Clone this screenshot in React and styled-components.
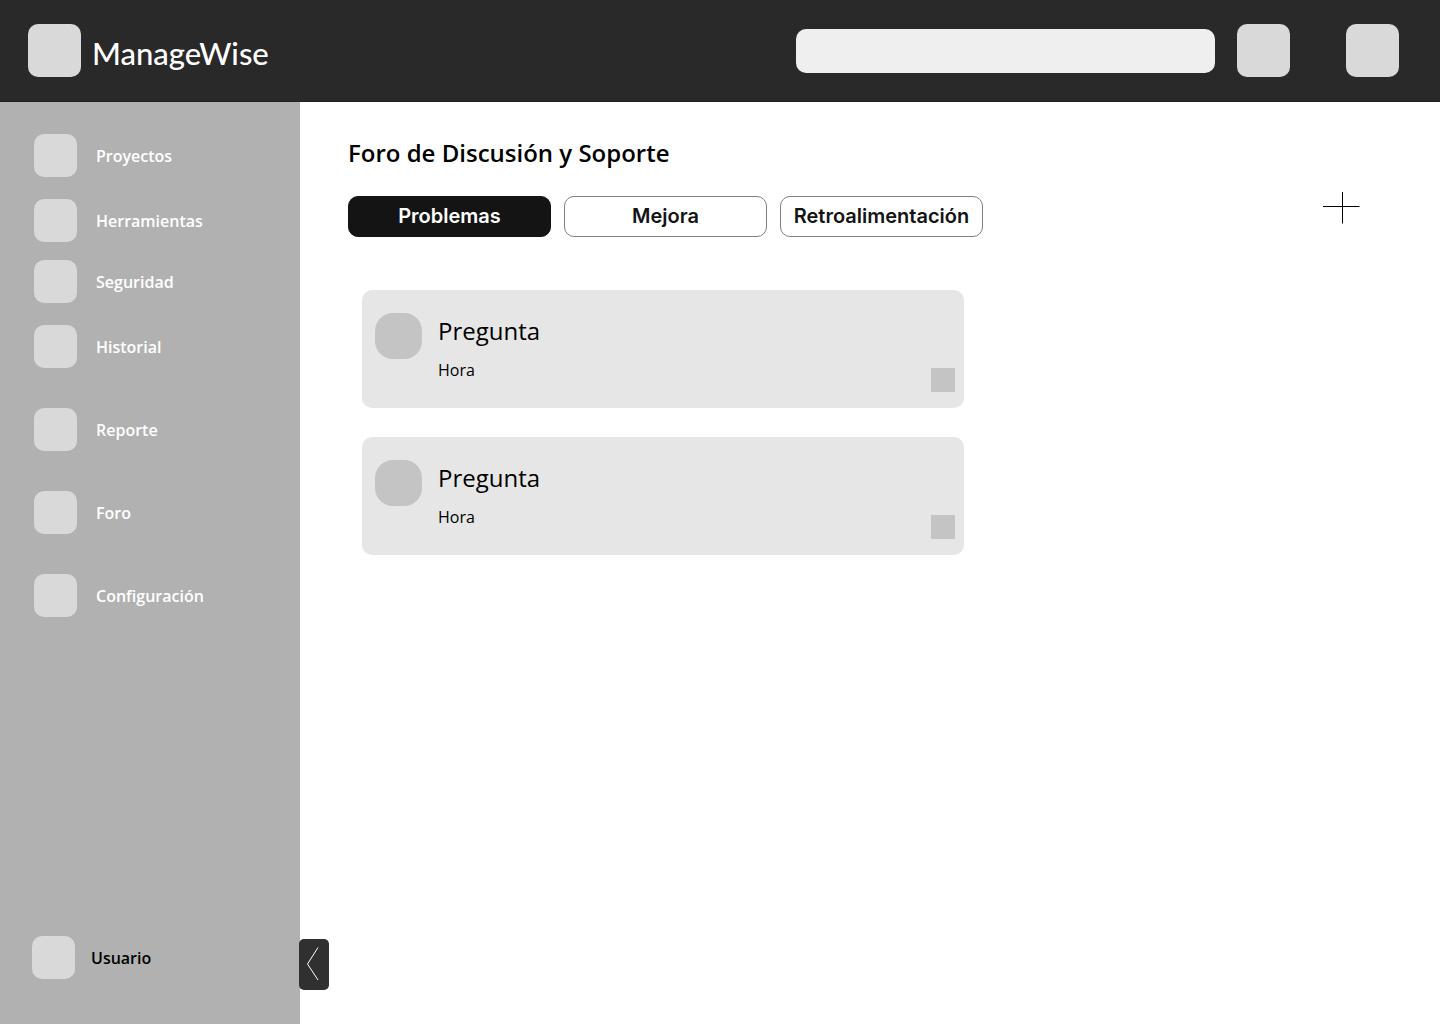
import React, { useState } from "react";
import styled, { createGlobalStyle } from "styled-components";

const GlobalStyle = createGlobalStyle`
  *, *::before, *::after { box-sizing: border-box; }
  body {
    margin: 0;
    background: #ffffff;
    color: #000000;
    font-family: "Open Sans", "Noto Sans", sans-serif;
  }
  button, input { font: inherit; }
`;

const Page = styled.div`
  display: flex;
  flex-direction: column;
  min-height: 100vh;
`;

const Header = styled.header`
  display: flex;
  align-items: center;
  justify-content: space-between;
  gap: 24px;
  height: 102px;
  padding: 0 41px 0 28px;
  background: #292929;
  border-bottom: 1px solid #231f20;
`;

const Brand = styled.a`
  display: flex;
  align-items: center;
  gap: 11px;
  color: #ffffff;
  text-decoration: none;
`;

const BrandName = styled.span`
  padding-top: 4px;
  font-family: Lato, sans-serif;
  font-size: 31px;
  font-weight: 500;
  line-height: 36px;
`;

const Tile = styled.span`
  flex: none;
  width: ${({ $size }) => $size}px;
  height: ${({ $size }) => $size}px;
  border-radius: 10px;
  background: #d9d9d9;
`;

const HeaderTools = styled.div`
  display: flex;
  flex: 0 1 603px;
  align-items: center;
  gap: 22px;
`;

const Search = styled.input`
  flex: 1;
  min-width: 0;
  height: 44px;
  padding: 0 16px;
  border: 0;
  border-radius: 10px;
  background: #efefef;
  font-size: 16px;
`;

const HeaderActions = styled.div`
  display: flex;
  gap: 56px;
`;

const TileButton = styled.button`
  width: 53px;
  height: 53px;
  padding: 0;
  border: 0;
  border-radius: 10px;
  background: #d9d9d9;
  cursor: pointer;
`;

const Body = styled.div`
  display: grid;
  flex: 1;
  grid-template-columns: 300px 1fr;
`;

const Sidebar = styled.aside`
  position: relative;
  display: flex;
  flex-direction: column;
  justify-content: space-between;
  padding: 32px 32px 45px;
  background: #b1b1b1;
`;

const Nav = styled.nav`
  display: flex;
  flex-direction: column;
  gap: 40px;
  padding-left: 2px;
`;

const NavPair = styled.div`
  display: flex;
  flex-direction: column;
  gap: 22px;
`;

const NavGroup = styled.div`
  display: flex;
  flex-direction: column;
  gap: 18px;
`;

const SideLink = styled.a`
  display: flex;
  align-items: center;
  gap: ${({ $gap }) => $gap}px;
  color: ${({ $color }) => $color};
  font-size: 16px;
  font-weight: 600;
  line-height: 22px;
  text-decoration: none;
`;

const Collapse = styled.button`
  position: absolute;
  bottom: 34px;
  left: calc(100% - 1px);
  display: grid;
  place-items: center;
  width: 30px;
  height: 51px;
  padding: 0;
  border: 0;
  border-radius: 5px;
  background: #303030;
  cursor: pointer;
`;

const Main = styled.main`
  padding: 34px 80px 40px 48px;
`;

const Title = styled.h1`
  margin: 0;
  font-size: 24px;
  font-weight: 600;
  line-height: 34px;
`;

const Toolbar = styled.div`
  display: flex;
  align-items: flex-start;
  justify-content: space-between;
  margin-top: 22px;
`;

const Tabs = styled.div`
  display: flex;
  gap: 13px;
  padding-top: 4px;
`;

const Tab = styled.button`
  width: 203px;
  height: 41px;
  padding: 0 0 2px;
  border: 1px solid ${({ $active }) => ($active ? "#141414" : "#808080")};
  border-radius: 10px;
  background: ${({ $active }) => ($active ? "#141414" : "#ffffff")};
  color: ${({ $active }) => ($active ? "#ffffff" : "#141414")};
  font-family: Inter, sans-serif;
  font-size: 20px;
  font-weight: 600;
  line-height: 24px;
  cursor: pointer;
`;

const AddButton = styled.button`
  display: block;
  padding: 0;
  border: 0;
  background: none;
  cursor: pointer;

  svg { display: block; }
`;

const List = styled.ul`
  display: grid;
  gap: 29px;
  max-width: 602px;
  margin: 53px 0 0 14px;
  padding: 0;
  list-style: none;
`;

const Card = styled.li`
  display: flex;
  gap: 16px;
  height: 118px;
  padding: 23px 9px 16px 13px;
  border-radius: 10px;
  background: #e6e6e6;
`;

const Avatar = styled.span`
  flex: none;
  width: 47px;
  height: 46px;
  border-radius: 18px;
  background: #c4c4c4;
`;

const CardText = styled.div`
  flex: 1;
`;

const Question = styled.h2`
  margin: 0;
  font-size: 24px;
  font-weight: 400;
  line-height: 36px;
`;

const Time = styled.p`
  margin: 10px 0 0;
  font-size: 16px;
  line-height: 22px;
`;

const CardAction = styled.button`
  align-self: flex-end;
  width: 24px;
  height: 24px;
  padding: 0;
  border: 0;
  background: #c4c4c4;
  cursor: pointer;
`;

const navGroups = [
  [
    ["Proyectos", "Herramientas"],
    ["Seguridad", "Historial"],
  ],
  [["Reporte"]],
  [["Foro"]],
  [["Configuración"]],
];

const tabs = ["Problemas", "Mejora", "Retroalimentación"];

const questions = [
  { id: 1, title: "Pregunta", time: "Hora" },
  { id: 2, title: "Pregunta", time: "Hora" },
];

export default function App() {
  const [active, setActive] = useState(tabs[0]);

  return (
    <Page>
      <GlobalStyle />
      <Header>
        <Brand href="#inicio">
          <Tile $size={53} />
          <BrandName>ManageWise</BrandName>
        </Brand>
        <HeaderTools>
          <Search type="search" aria-label="Buscar" />
          <HeaderActions>
            <TileButton type="button" aria-label="Notificaciones" />
            <TileButton type="button" aria-label="Perfil" />
          </HeaderActions>
        </HeaderTools>
      </Header>
      <Body>
        <Sidebar>
          <Nav aria-label="Principal">
            {navGroups.map((group, index) => (
              <NavGroup key={index}>
                {group.map((pair) => (
                  <NavPair key={pair[0]}>
                    {pair.map((label) => (
                      <SideLink key={label} href={`#${label.toLowerCase()}`} $gap={19} $color="#ffffff">
                        <Tile $size={43} />
                        {label}
                      </SideLink>
                    ))}
                  </NavPair>
                ))}
              </NavGroup>
            ))}
          </Nav>
          <SideLink href="#usuario" $gap={16} $color="#000000">
            <Tile $size={43} />
            Usuario
          </SideLink>
          <Collapse type="button" aria-label="Contraer menú">
            <svg width="14" height="36" viewBox="0 0 14 36" fill="none" stroke="#ffffff">
              <path d="M11 0.500 L0.500 17 L11 33" />
            </svg>
          </Collapse>
        </Sidebar>
        <Main>
          <Title>Foro de Discusión y Soporte</Title>
          <Toolbar>
            <Tabs>
              {tabs.map((tab) => (
                <Tab
                  key={tab}
                  type="button"
                  $active={tab === active}
                  aria-pressed={tab === active}
                  onClick={() => setActive(tab)}
                >
                  {tab}
                </Tab>
              ))}
            </Tabs>
            <AddButton type="button" aria-label="Nueva pregunta">
              <svg width="37" height="32" viewBox="0 0 37 32" stroke="#000000">
                <path d="M0 14.500 H36.500 M19.500 0 V31.500" />
              </svg>
            </AddButton>
          </Toolbar>
          <List>
            {questions.map((question) => (
              <Card key={question.id}>
                <Avatar />
                <CardText>
                  <Question>{question.title}</Question>
                  <Time>{question.time}</Time>
                </CardText>
                <CardAction type="button" aria-label="Responder" />
              </Card>
            ))}
          </List>
        </Main>
      </Body>
    </Page>
  );
}
